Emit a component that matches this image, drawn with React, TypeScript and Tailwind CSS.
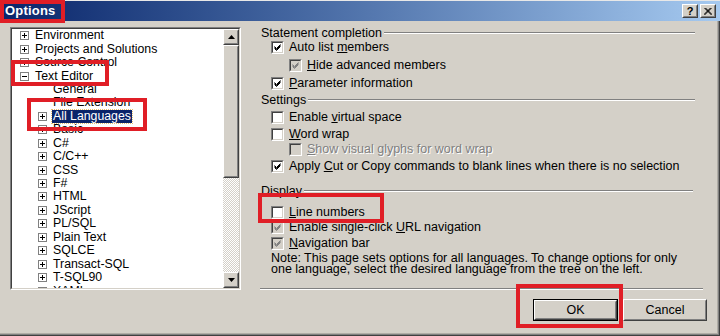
import React from 'react'

const FONT = "font-['Liberation_Sans',Arial,sans-serif]"

type Node = { label: string; level: 0 | 1; box?: 'plus' | 'minus'; selected?: boolean }

const TREE: Node[] = [
  { label: 'Environment', level: 0, box: 'plus' },
  { label: 'Projects and Solutions', level: 0, box: 'plus' },
  { label: 'Source Control', level: 0, box: 'plus' },
  { label: 'Text Editor', level: 0, box: 'minus' },
  { label: 'General', level: 1 },
  { label: 'File Extension', level: 1 },
  { label: 'All Languages', level: 1, box: 'plus', selected: true },
  { label: 'Basic', level: 1, box: 'plus' },
  { label: 'C#', level: 1, box: 'plus' },
  { label: 'C/C++', level: 1, box: 'plus' },
  { label: 'CSS', level: 1, box: 'plus' },
  { label: 'F#', level: 1, box: 'plus' },
  { label: 'HTML', level: 1, box: 'plus' },
  { label: 'JScript', level: 1, box: 'plus' },
  { label: 'PL/SQL', level: 1, box: 'plus' },
  { label: 'Plain Text', level: 1, box: 'plus' },
  { label: 'SQLCE', level: 1, box: 'plus' },
  { label: 'Transact-SQL', level: 1, box: 'plus' },
  { label: 'T-SQL90', level: 1, box: 'plus' },
  { label: 'XAML', level: 1, box: 'plus' },
]

function Expander({ kind }: { kind: 'plus' | 'minus' }) {
  return (
    <svg width="9" height="9" viewBox="0 0 9 9" className="shrink-0">
      <rect x="0.5" y="0.5" width="8" height="8" fill="#fff" stroke="#808080" />
      <line x1="2" y1="4.5" x2="7" y2="4.5" stroke="#000" />
      {kind === 'plus' && <line x1="4.5" y1="2" x2="4.5" y2="7" stroke="#000" />}
    </svg>
  )
}

function Check({ checked, disabled }: { checked?: boolean; disabled?: boolean }) {
  return (
    <span
      className={`relative inline-block w-[13px] h-[13px] shrink-0 border border-t-[#808080] border-l-[#808080] border-b-white border-r-white ${
        disabled ? 'bg-[#d4d0c8]' : 'bg-white'
      }`}
    >
      <span className="absolute inset-0 border border-t-[#404040] border-l-[#404040] border-b-[#d4d0c8] border-r-[#d4d0c8]" />
      {checked && (
        <svg width="11" height="11" viewBox="0 0 11 11" className="absolute left-0 top-0">
          <path d="M2.5 4.5 L4.5 6.5 L8.5 2.5 M2.5 5.5 L4.5 7.5 L8.5 3.5 M2.5 6.5 L4.5 8.5 L8.5 4.5" stroke={disabled ? '#808080' : '#000'} strokeWidth="1" fill="none" />
        </svg>
      )}
    </span>
  )
}

function Row({ className, children, checked, disabled, dimText }: { className: string; children: React.ReactNode; checked?: boolean; disabled?: boolean; dimText?: boolean }) {
  return (
    <div className={`flex items-center h-[14px] gap-[5px] ${className}`}>
      <Check checked={checked} disabled={disabled} />
      <span className={`whitespace-nowrap ${dimText ? 'text-[#808080] [text-shadow:1px_1px_0_#fff]' : 'text-black'}`}>{children}</span>
    </div>
  )
}

function Group({ label, className }: { label: string; className: string }) {
  return (
    <div className={`flex items-center h-[14px] mr-[8px] ${className}`}>
      <span className="whitespace-nowrap">{label}</span>
      <span className="flex-1 ml-[2px] h-[2px] border-t border-t-[#808080] border-b border-b-white" />
    </div>
  )
}

function Raised({ children, className }: { children?: React.ReactNode; className: string }) {
  return (
    <div className={`border border-t-white border-l-white border-r-[#404040] border-b-[#404040] bg-[#d4d0c8] ${className}`}>
      <div className="w-full h-full border border-t-[#d4d0c8] border-l-[#d4d0c8] border-r-[#808080] border-b-[#808080] flex items-center justify-center">
        {children}
      </div>
    </div>
  )
}

export default function App() {
  return (
    <div className={`relative w-[720px] h-[336px] bg-[#d4d0c8] text-[12px] text-black ${FONT} shadow-[inset_-1px_-1px_#404040,inset_-2px_-2px_#808080,inset_-3px_-3px_#b0ada6] flex flex-col overflow-hidden`}>
      {/* Title bar */}
      <div className="h-[21px] shrink-0 border-t border-t-[#e8e8e8] bg-gradient-to-r from-[#0a246a] to-[#a6caf0] flex items-center pl-[5px] pr-[4px]">
        <span className="text-white font-bold text-[13px] tracking-[0.2px]">Options</span>
        <div className="ml-auto flex gap-[2px]">
          <Raised className="w-[16px] h-[14px]">
            <span className="font-bold text-[11px] leading-none">?</span>
          </Raised>
          <Raised className="w-[16px] h-[14px]">
            <svg width="8" height="7" viewBox="0 0 8 7">
              <path d="M0.5 0 L7.5 7 M1.5 0 L8 6.5 M7.5 0 L0.5 7 M6.5 0 L0 6.5" stroke="#000" strokeWidth="1" />
            </svg>
          </Raised>
        </div>
      </div>

      {/* Body */}
      <div className="flex">
        {/* Tree */}
        <div className="ml-[10px] mt-[6px] w-[231px] h-[263px] border border-t-[#808080] border-l-[#808080] border-b-white border-r-white">
          <div className="w-full h-full border border-t-[#404040] border-l-[#404040] border-b-[#d4d0c8] border-r-[#d4d0c8] bg-white flex">
            <div className="flex-1 overflow-hidden text-[12.3px]">
              {TREE.map((n) => (
                <div key={n.label} className={`flex items-center h-[13.44px] gap-[6px] ${n.level === 0 ? 'pl-[8px]' : 'pl-[26px]'}`}>
                  {n.box ? <Expander kind={n.box} /> : <span className="w-[9px] shrink-0" />}
                  <span
                    className={`whitespace-nowrap leading-[13px] ${
                      n.selected ? 'bg-[#0a246a] text-white outline-1 outline-dotted outline-[#e8c070] px-[1px] -ml-[1px]' : ''
                    }`}
                  >
                    {n.label}
                  </span>
                </div>
              ))}
            </div>
            {/* Scrollbar */}
            <div className="w-[16px] flex flex-col">
              <Raised className="h-[16px] w-[16px]">
                <svg width="7" height="4" viewBox="0 0 7 4">
                  <path d="M3.5 0 L7 4 L0 4 Z" fill="#000" />
                </svg>
              </Raised>
              <Raised className="h-[133px] w-[16px]" />
              <div className="flex-1 bg-[repeating-conic-gradient(#ffffff_0%_25%,#d4d0c8_0%_50%)] bg-[length:2px_2px]" />
              <Raised className="h-[16px] w-[16px]">
                <svg width="7" height="4" viewBox="0 0 7 4">
                  <path d="M0 0 L7 0 L3.5 4 Z" fill="#000" />
                </svg>
              </Raised>
            </div>
          </div>
        </div>

        {/* Settings */}
        <div className="ml-[20px] w-[442px] pt-[5px] flex flex-col text-[12.5px]">
          <Group label="Statement completion" className="" />
          <Row className="pl-[10px]" checked>
            Auto list <u>m</u>embers
          </Row>
          <Row className="pl-[28px] mt-[4px]" checked disabled>
            <u>H</u>ide advanced members
          </Row>
          <Row className="pl-[10px] mt-[4px]" checked>
            <u>P</u>arameter information
          </Row>
          <Group label="Settings" className="mt-[3px]" />
          <Row className="pl-[10px] mt-[3px]">
            Enable <u>v</u>irtual space
          </Row>
          <Row className="pl-[10px] mt-[3px]">
            <u>W</u>ord wrap
          </Row>
          <Row className="pl-[28px] mt-[1px]" disabled dimText>
            <u>S</u>how visual glyphs for word wrap
          </Row>
          <Row className="pl-[10px] mt-[3px]" checked>
            Apply <u>C</u>ut or Copy commands to blank lines when there is no selection
          </Row>
          <Group label="Display" className="mt-[11px] mr-[10px]" />
          <Row className="pl-[10px] mt-[7px]">
            <u>L</u>ine numbers
          </Row>
          <Row className="pl-[10px] mt-[1px]" checked disabled>
            Enable single-click <u>U</u>RL navigation
          </Row>
          <Row className="pl-[10px] mt-[2px]" checked disabled>
            <u>N</u>avigation bar
          </Row>
          <p className="pl-[10px] mt-[3px] leading-[11px] whitespace-nowrap">
            Note: This page sets options for all languages. To change options for only
            <br />
            one language, select the desired language from the tree on the left.
          </p>
          <div className="mt-[13px] h-[2px] border-t border-t-[#808080] border-b border-b-white -ml-[1px]" />
          <div className="mt-[9px] flex justify-end gap-[5px] -mr-[4px] text-[12.5px]">
            <div className="border border-black">
              <Raised className="w-[83px] h-[20px]">OK</Raised>
            </div>
            <Raised className="w-[84px] h-[22px]">Cancel</Raised>
          </div>
        </div>
      </div>

      {/* Red annotation boxes */}
      <div className="absolute left-0 top-0 w-[65px] h-[23px] border-4 border-[#e01e26]" />
      <div className="absolute left-[11px] top-[60px] w-[98px] h-[26px] border-4 border-[#e01e26]" />
      <div className="absolute left-[27px] top-[98px] w-[120px] h-[33px] border-4 border-[#e01e26]" />
      <div className="absolute left-[258px] top-[193px] w-[126px] h-[30px] border-4 border-[#e01e26]" />
      <div className="absolute left-[516px] top-[284px] w-[107px] h-[44px] border-4 border-[#e01e26]" />
    </div>
  )
}
